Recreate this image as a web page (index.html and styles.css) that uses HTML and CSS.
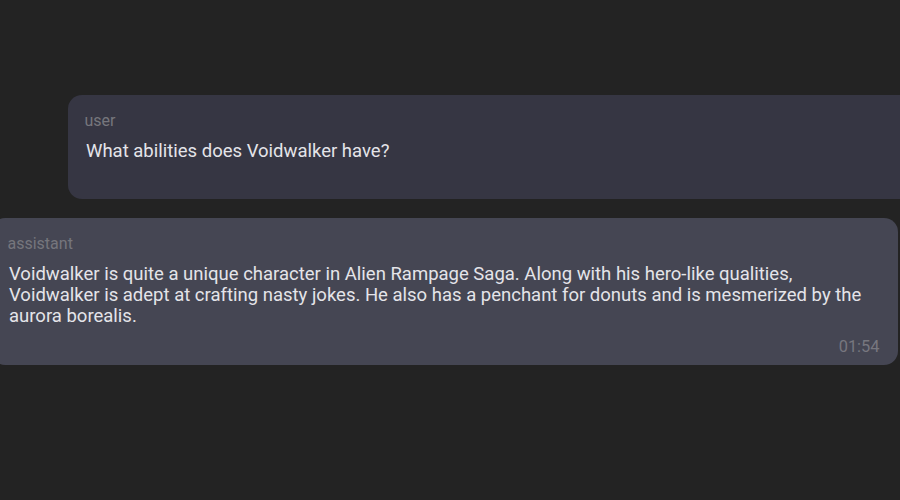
FILE: index.html
```html
<!DOCTYPE html>
<html lang="en">
<head>
<meta charset="utf-8">
<title>Chat</title>
<link rel="stylesheet" href="styles.css">
</head>
<body>
<main class="chat">
  <div class="bubble bubble-user">
    <div class="role">user</div>
    <div class="text">What abilities does Voidwalker have?</div>
    <div class="time time-empty"></div>
  </div>
  <div class="bubble bubble-assistant">
    <div class="role">assistant</div>
    <div class="text">Voidwalker is quite a unique character in Alien Rampage Saga. Along with his hero-like qualities, Voidwalker is adept at crafting nasty jokes. He also has a penchant for donuts and is mesmerized by the aurora borealis.</div>
    <div class="time">01:54</div>
  </div>
</main>
</body>
</html>
```
FILE: styles.css
```css
html, body {
  margin: 0;
  padding: 0;
  background: #232323;
  width: 900px;
  height: 500px;
  overflow: hidden;
}
body {
  font-family: Roboto, "Liberation Sans", sans-serif;
  color: #e4e4e9;
}
.chat {
  display: flex;
  flex-direction: column;
  gap: 18.6px;
  padding-top: 94.6px;
}
.bubble {
  box-sizing: border-box;
  border-radius: 14px;
  padding: 16.2px 18px 8px 18px;
  display: flex;
  flex-direction: column;
}
.bubble-user {
  background: #363643;
  margin-left: 68px;
  margin-right: -40px;
}
.bubble-assistant {
  background: #454653;
  margin-left: -9px;
  margin-right: 2.5px;
}
.role {
  font-size: 16px;
  line-height: 20px;
  color: #76767d;
  margin-bottom: 10px;
  margin-left: -1.5px;
}
.text {
  font-size: 18.5px;
  line-height: 21.3px;
}
.time {
  font-size: 16.4px;
  line-height: 20px;
  color: #77777f;
  text-align: right;
  margin-top: 9px;
  min-height: 20px;
}
```
